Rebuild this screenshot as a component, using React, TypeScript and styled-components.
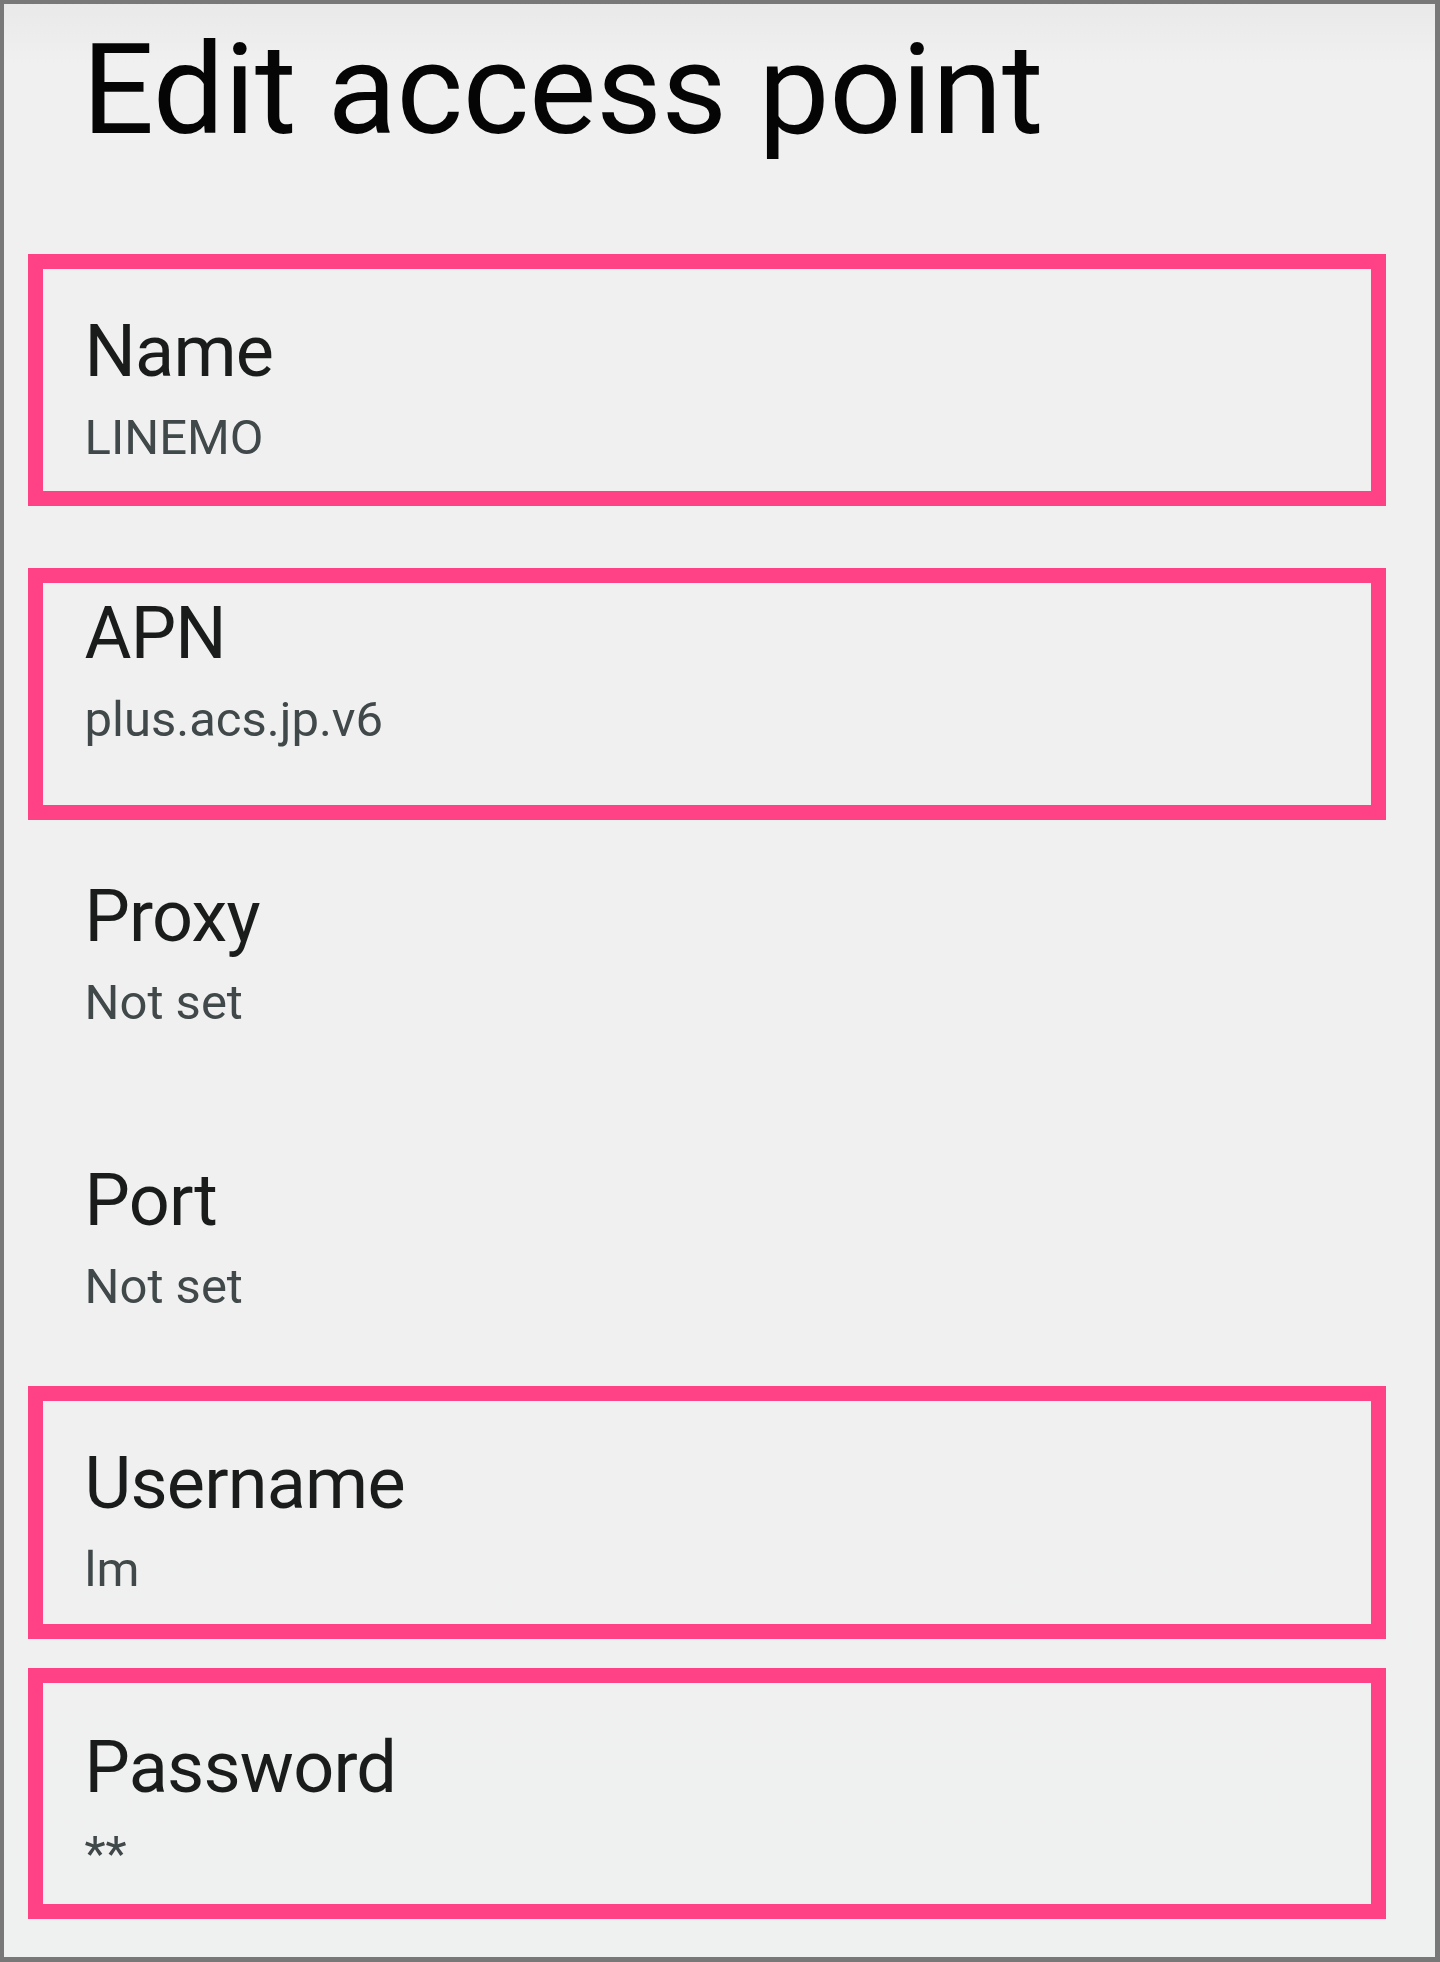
import { FC } from "react";
import styled, { createGlobalStyle } from "styled-components";

const GlobalStyle = createGlobalStyle`
  html, body {
    margin: 0;
    padding: 0;
    background: #777877;
  }
  * {
    box-sizing: border-box;
  }
`;

type Field = {
  label: string;
  value: string;
  marked: boolean;
  gap: number;      // space above the row
  height: number;   // row height incl. border
  pad: number;      // top padding inside the row
};

const fields: Field[] = [
  { label: "Name", value: "LINEMO", marked: true, gap: 101.6, height: 252, pad: 47 },
  { label: "APN", value: "plus.acs.jp.v6", marked: true, gap: 62, height: 252, pad: 15 },
  { label: "Proxy", value: "Not set", marked: false, gap: 0, height: 284, pad: 46 },
  { label: "Port", value: "Not set", marked: false, gap: 0, height: 282, pad: 46 },
  { label: "Username", value: "lm", marked: true, gap: 0, height: 253, pad: 47 },
  { label: "Password", value: "**", marked: true, gap: 29, height: 251, pad: 49 },
];

export default function App() {
  return (
    <>
      <GlobalStyle />
      <Screen>
        <Title>Edit access point</Title>
        <FieldList>
          {fields.map((f) => (
            <FieldRow key={f.label} f={f} />
          ))}
        </FieldList>
      </Screen>
    </>
  );
}

const FieldRow: FC<{ f: Field }> = ({ f }) => (
  <Row $marked={f.marked} $gap={f.gap} $height={f.height} $pad={f.pad}>
    <Label>{f.label}</Label>
    <Value>{f.value}</Value>
  </Row>
);

const Screen = styled.div`
  width: 1440px;
  height: 1962px;
  border-style: solid;
  border-color: #777877;
  border-width: 4px 5px 5px 4px;
  background: linear-gradient(to bottom, #e8e9e8 0px, #eff0ef 60px, #eff1f0 100%);
  padding-top: 21.5px;
  overflow: hidden;
`;

const Title = styled.h1`
  margin: 0;
  padding-left: 78px;
  font-family: Roboto, "Noto Sans", sans-serif;
  font-weight: 400;
  font-size: 127px;
  line-height: 1;
  color: #050505;
  letter-spacing: -0.2px;
`;

const FieldList = styled.div`
  display: flex;
  flex-direction: column;
  margin-left: 23.5px;
  width: 1358.5px;
`;

const Row = styled.div<{ $marked: boolean; $gap: number; $height: number; $pad: number }>`
  margin-top: ${(p) => p.$gap}px;
  height: ${(p) => p.$height}px;
  padding: ${(p) => p.$pad}px 0 0 42px;
  border: 15px solid ${(p) => (p.$marked ? "#ff4285" : "transparent")};
  display: flex;
  flex-direction: column;
  gap: 25px;
`;

const Label = styled.div`
  font-family: Roboto, "Noto Sans", sans-serif;
  font-size: 72px;
  line-height: 1;
  color: #1a1c1c;
  letter-spacing: -0.8px;
`;

const Value = styled.div`
  font-family: Roboto, "Noto Sans", sans-serif;
  font-size: 49px;
  line-height: 1;
  color: #40484a;
`;
